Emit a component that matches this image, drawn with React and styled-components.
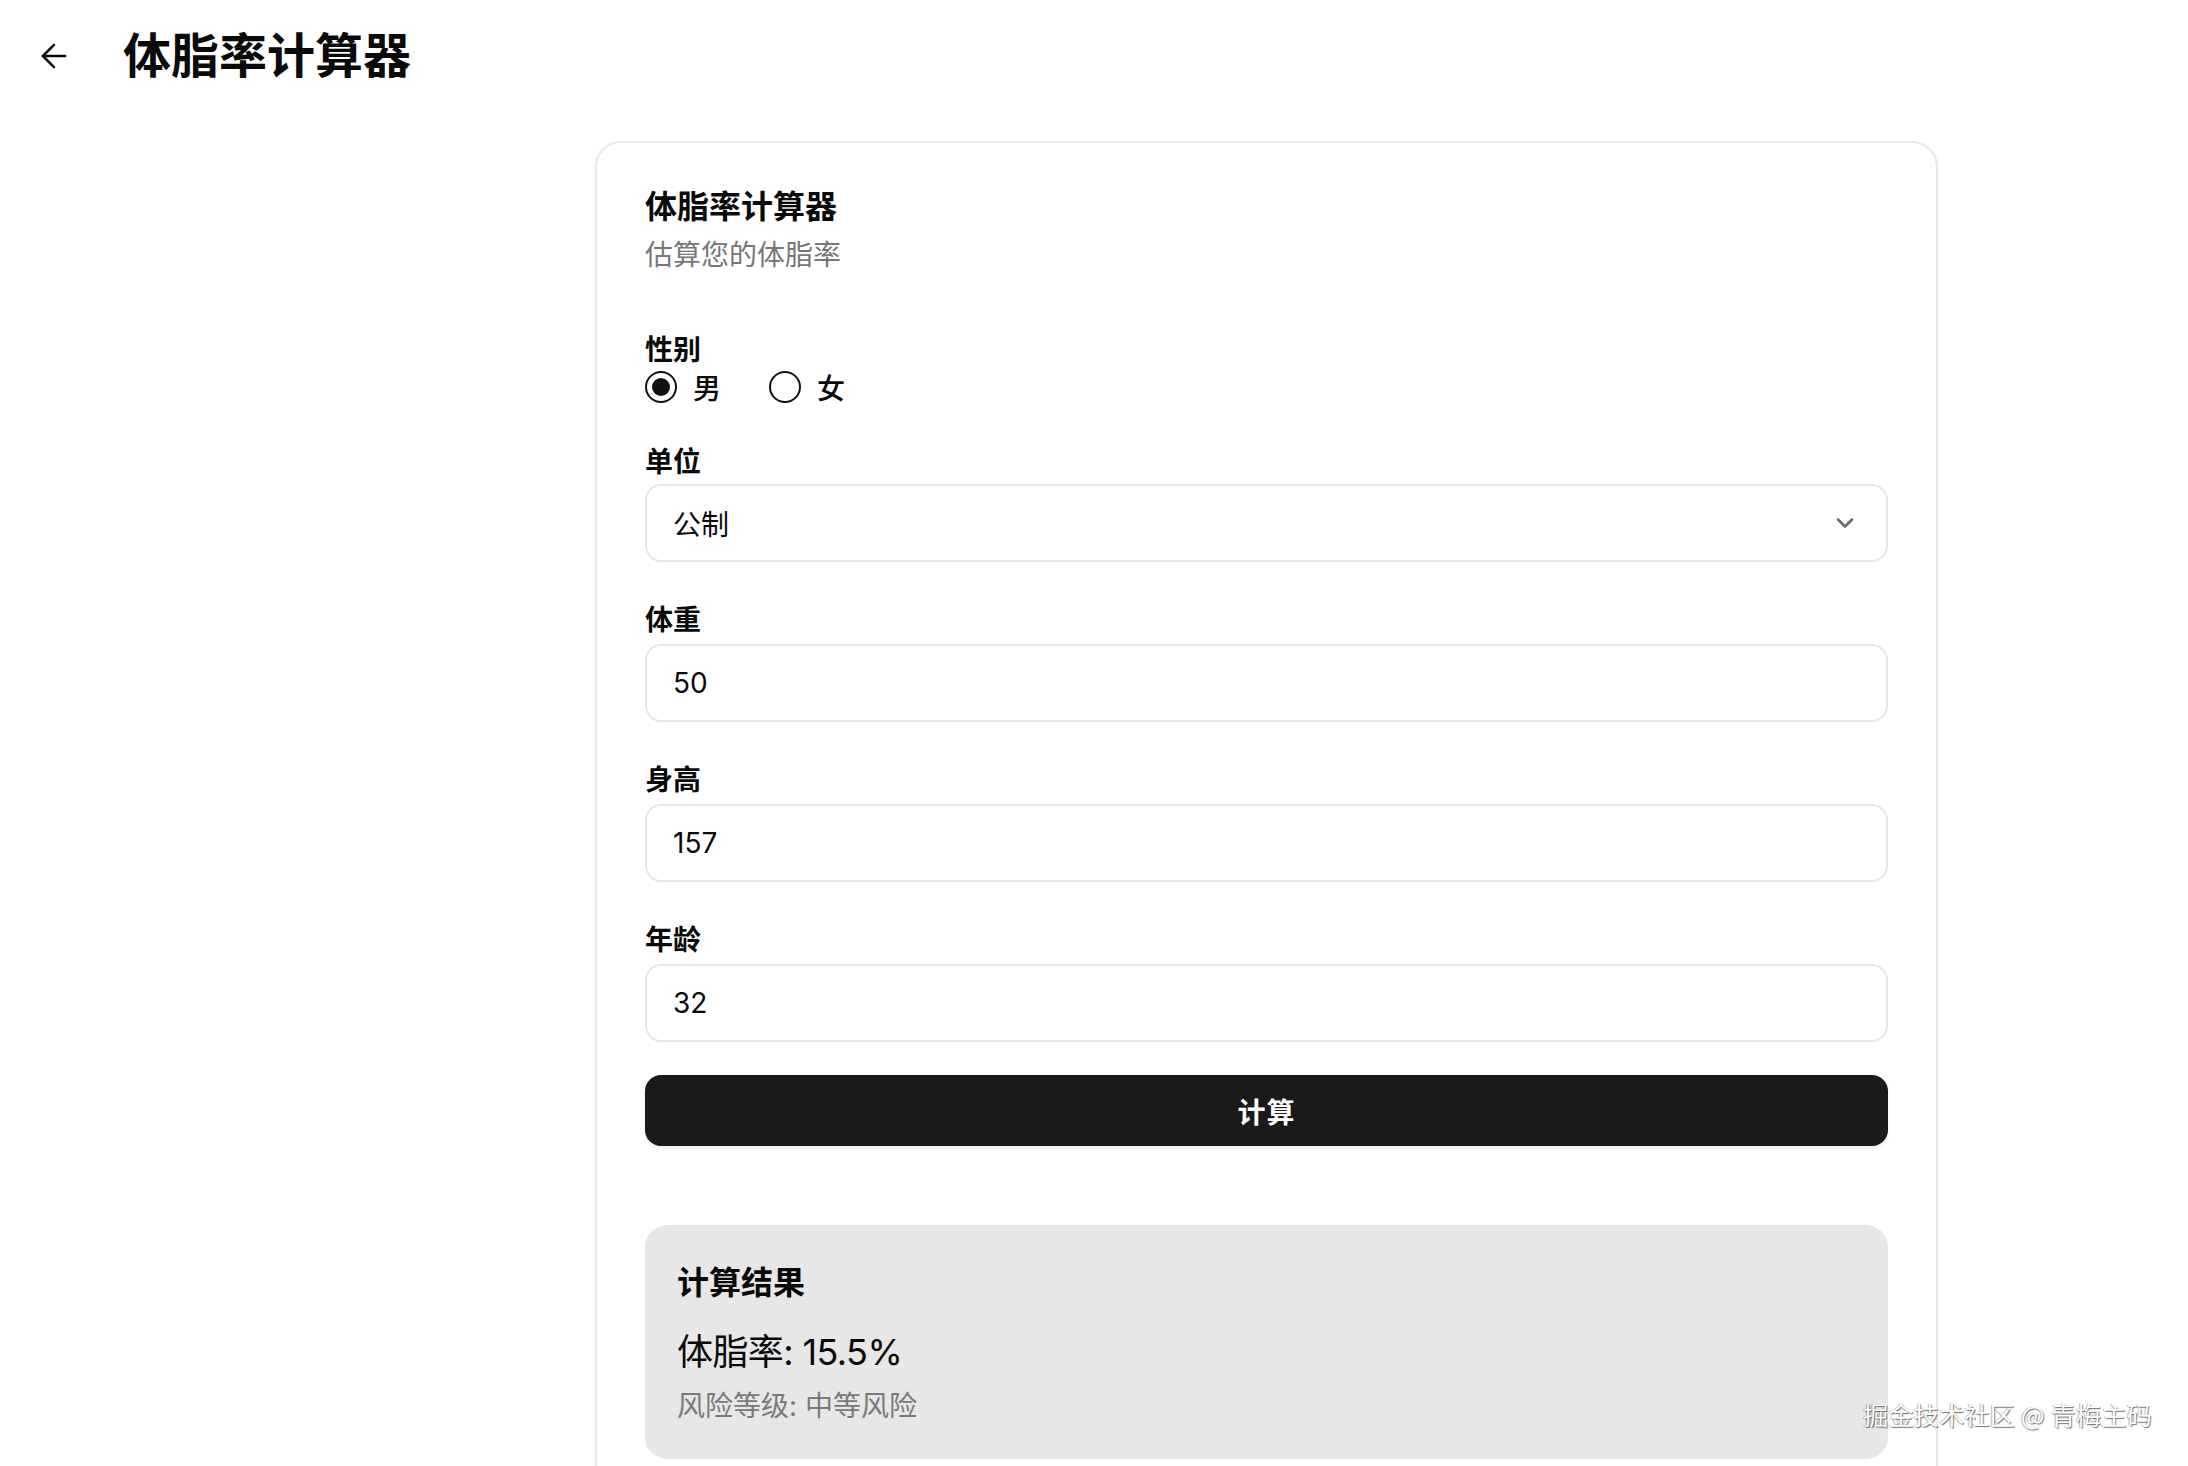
import React, { useState } from "react";
import styled, { createGlobalStyle } from "styled-components";
import { ArrowLeft, ChevronDown } from "lucide-react";

const GlobalStyle = createGlobalStyle`
  html, body {
    margin: 0;
    padding: 0;
    background: #ffffff;
    overflow: hidden;
  }
  body {
    font-family: Inter, "Noto Sans CJK SC", "Noto Sans", sans-serif;
    color: #0a0a0a;
  }
  * {
    box-sizing: border-box;
  }
`;

const Page = styled.div`
  width: 2188px;
  height: 1466px;
  position: relative;
  overflow: hidden;
  background: #fff;
`;

const Header = styled.header`
  height: 112px;
  display: flex;
  align-items: center;
  padding-left: 35px;
  gap: 50px;
`;

const BackButton = styled.button`
  width: 38px;
  height: 38px;
  padding: 0;
  border: none;
  background: none;
  display: flex;
  align-items: center;
  justify-content: center;
  color: #0a0a0a;
  cursor: pointer;
`;

const PageTitle = styled.h1`
  margin: 0;
  font-size: 48px;
  font-weight: 700;
  line-height: 1;
  letter-spacing: 0;
`;

const Main = styled.main`
  padding: 29px 0 0 595px;
`;

const Card = styled.section`
  width: 1343px;
  border: 2px solid #e8e8e8;
  border-radius: 26px;
  background: #fff;
  box-shadow: 0 2px 6px rgba(0, 0, 0, 0.04);
  padding: 46px 48px 120px 48px;
`;

const CardHeader = styled.div`
  display: flex;
  flex-direction: column;
  gap: 13px;
  margin-bottom: 61px;
`;

const CardTitle = styled.h2`
  margin: 0;
  font-size: 32px;
  font-weight: 700;
  line-height: 36px;
`;

const CardDescription = styled.p`
  margin: 0;
  font-size: 28px;
  line-height: 34px;
  color: #777777;
`;

const Form = styled.div`
  display: flex;
  flex-direction: column;
  gap: 41px;
`;

const Field = styled.div`
  display: flex;
  flex-direction: column;
  gap: ${(p) => p.$gap || 5}px;
`;

const Label = styled.label`
  font-size: 28px;
  font-weight: 600;
  line-height: 34px;
`;

const RadioGroup = styled.div`
  display: flex;
  align-items: center;
  gap: 48px;
  height: 34px;
`;

const RadioOption = styled.label`
  display: flex;
  align-items: center;
  gap: 16px;
  font-size: 28px;
  font-weight: 500;
  cursor: pointer;
`;

const RadioCircle = styled.span`
  width: 32px;
  height: 32px;
  border-radius: 50%;
  border: 2.5px solid #111;
  display: flex;
  align-items: center;
  justify-content: center;

  &::after {
    content: "";
    width: 18px;
    height: 18px;
    border-radius: 50%;
    background: #111;
    display: ${(p) => (p.$checked ? "block" : "none")};
  }
`;

const SelectTrigger = styled.button`
  width: 100%;
  height: 78px;
  border: 2px solid #e6e6e6;
  border-radius: 16px;
  background: #fff;
  display: flex;
  align-items: center;
  justify-content: space-between;
  padding: 0 27px 0 26px;
  font-family: inherit;
  font-size: 28px;
  color: #0a0a0a;
  cursor: pointer;

  svg {
    color: #6a6a6a;
  }
`;

const TextInput = styled.input`
  width: 100%;
  height: 78px;
  border: 2px solid #e6e6e6;
  border-radius: 16px;
  padding: 0 26px;
  font-family: inherit;
  font-size: 28px;
  color: #0a0a0a;
  outline: none;
  background: #fff;
`;

const SubmitButton = styled.button`
  width: 100%;
  height: 71px;
  margin-top: -8px;
  border: none;
  border-radius: 16px;
  background: #1a1a1a;
  color: #fff;
  font-family: inherit;
  font-size: 28px;
  font-weight: 700;
  letter-spacing: 1px;
  box-shadow: 0 2px 4px rgba(0, 0, 0, 0.08);
  cursor: pointer;
`;

const ResultBox = styled.div`
  margin-top: 79px;
  background: #e7e7e7;
  border-radius: 22px;
  padding: 30px 32px 33px;
  display: flex;
  flex-direction: column;
`;

const ResultTitle = styled.h3`
  margin: 0 0 17px;
  font-size: 32px;
  font-weight: 700;
  line-height: 56px;
`;

const ResultValue = styled.div`
  font-size: 36px;
  font-weight: 400;
  line-height: 48px;
  letter-spacing: -0.6px;
  margin-bottom: 10px;
`;

const ResultRisk = styled.div`
  font-size: 28px;
  line-height: 40px;
  color: #7a7a7a;
`;

const Watermark = styled.div`
  position: absolute;
  right: 36px;
  bottom: 34px;
  font-family: "Noto Sans CJK SC", sans-serif;
  font-size: 25px;
  color: #ffffff;
  text-shadow: 1px 1px 1px rgba(0, 0, 0, 0.55), -1px 0 1px rgba(0, 0, 0, 0.3);
  letter-spacing: 0.3px;
`;

const fields = [
  { label: "体重", value: "50" },
  { label: "身高", value: "157" },
  { label: "年龄", value: "32" },
];

export default function App() {
  const [gender, setGender] = useState("male");

  return (
    <Page>
      <GlobalStyle />
      <Header>
        <BackButton aria-label="返回">
          <ArrowLeft size={38} strokeWidth={1.6} />
        </BackButton>
        <PageTitle>体脂率计算器</PageTitle>
      </Header>

      <Main>
        <Card>
          <CardHeader>
            <CardTitle>体脂率计算器</CardTitle>
            <CardDescription>估算您的体脂率</CardDescription>
          </CardHeader>

          <Form>
            <Field $gap={3}>
              <Label>性别</Label>
              <RadioGroup>
                <RadioOption onClick={() => setGender("male")}>
                  <RadioCircle $checked={gender === "male"} />
                  男
                </RadioOption>
                <RadioOption onClick={() => setGender("female")}>
                  <RadioCircle $checked={gender === "female"} />
                  女
                </RadioOption>
              </RadioGroup>
            </Field>

            <Field>
              <Label>单位</Label>
              <SelectTrigger>
                <span>公制</span>
                <ChevronDown size={28} strokeWidth={2.2} />
              </SelectTrigger>
            </Field>

            {fields.map((f) => (
              <Field key={f.label} $gap={7}>
                <Label>{f.label}</Label>
                <TextInput defaultValue={f.value} />
              </Field>
            ))}

            <SubmitButton>计算</SubmitButton>
          </Form>

          <ResultBox>
            <ResultTitle>计算结果</ResultTitle>
            <ResultValue>体脂率: 15.5%</ResultValue>
            <ResultRisk>风险等级: 中等风险</ResultRisk>
          </ResultBox>
        </Card>
      </Main>

      <Watermark>掘金技术社区 @ 青梅主码</Watermark>
    </Page>
  );
}
